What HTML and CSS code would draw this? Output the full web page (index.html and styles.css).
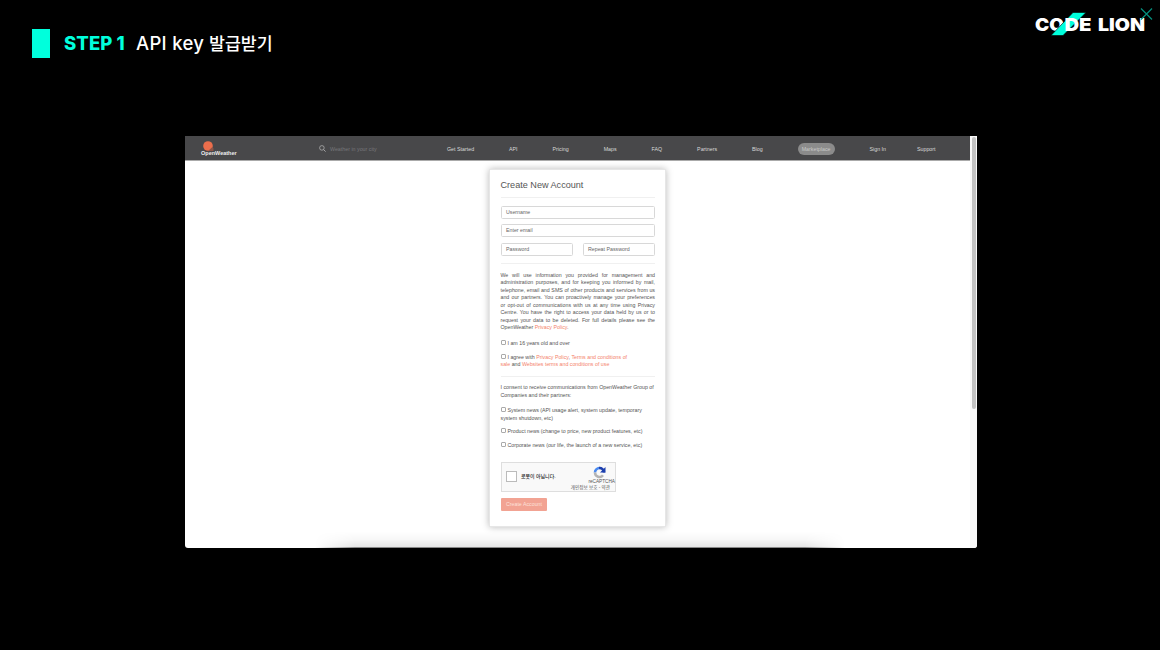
FILE: index.html
```html
<!DOCTYPE html>
<html lang="ko">
<head>
<meta charset="utf-8">
<title>STEP 1 API key 발급받기</title>
<link rel="stylesheet" href="styles.css">
</head>
<body>
<header class="slide-head">
  <div class="marker"></div>
  <h1 class="slide-title"><span class="step">STEP 1</span><span class="subject">API key</span><span class="subject-ko">발급받기</span></h1>
  <svg class="brand" width="130" height="40" viewBox="0 0 130 40">
    <text class="brand-text" x="5" y="31" textLength="29" lengthAdjust="spacingAndGlyphs">CO</text>
    <path d="M43 12.500h13L33 35.500H21z" fill="#00ffdc" stroke="#000" stroke-width=".6"/>
    <text class="brand-text" x="34.500" y="31" textLength="27" lengthAdjust="spacingAndGlyphs">DE</text>
    <text class="brand-text" x="68" y="31" textLength="47" lengthAdjust="spacingAndGlyphs">LION</text>
    <path d="M111 8.500l11 11M122 8.500l-11 11" stroke="#048f7d" stroke-width="1.200"/>
  </svg>
</header>
<main class="window">
  <div class="page">
    <nav class="nav">
      <div class="ow-logo">
        <svg width="11" height="10" viewBox="0 0 11 10"><circle cx="5" cy="5" r="4.800" fill="#ec6e4c"/><path d="M6.500 10V9A1.500 1.500 0 0 1 8 7.500a1.300 1.300 0 0 1 2.500 1V10z" fill="#8d5547"/></svg>
        <span>OpenWeather</span>
      </div>
      <div class="search">
        <svg width="7" height="7" viewBox="0 0 7 7"><circle cx="2.900" cy="2.900" r="2.300" fill="none" stroke="#bbb" stroke-width=".7"/><path d="M4.600 4.600l2 2" stroke="#bbb" stroke-width=".8"/></svg>
        <span>Weather in your city</span>
      </div>
      <div class="links">
        <span>Get Started</span><span>API</span><span>Pricing</span><span>Maps</span><span>FAQ</span><span>Partners</span><span>Blog</span><span class="pill">Marketplace</span><span>Sign In</span><span class="support">Support</span>
      </div>
    </nav>
    <section class="card">
      <h2>Create New Account</h2>
      <hr>
      <div class="fields">
        <div class="input">Username</div>
        <div class="input">Enter email</div>
        <div class="row"><div class="input">Password</div><div class="input">Repeat Password</div></div>
      </div>
      <hr>
      <p class="notice">
        <span>We will use information you provided for management and</span>
        <span>administration purposes, and for keeping you informed by mail,</span>
        <span>telephone, email and SMS of other products and services from us</span>
        <span>and our partners. You can proactively manage your preferences</span>
        <span>or opt-out of communications with us at any time using Privacy</span>
        <span>Centre. You have the right to access your data held by us or to</span>
        <span>request your data to be deleted. For full details please see the</span>
        <span class="last">OpenWeather <a>Privacy Policy</a>.</span>
      </p>
      <p class="check"><i class="box"></i>I am 16 years old and over</p>
      <p class="check agree"><i class="box"></i>I agree with <a>Privacy Policy</a>, <a>Terms and conditions of<br>sale</a> and <a>Websites terms and conditions of use</a></p>
      <hr>
      <p class="consent">I consent to receive communications from OpenWeather Group of<br>Companies and their partners:</p>
      <p class="check"><i class="box"></i>System news (API usage alert, system update, temporary<br>system shutdown, etc)</p>
      <p class="check"><i class="box"></i>Product news (change to price, new product features, etc)</p>
      <p class="check"><i class="box"></i>Corporate news (our life, the launch of a new service, etc)</p>
      <div class="captcha">
        <i class="tick"></i>
        <span class="robot">로봇이 아닙니다.</span>
        <div class="re">
          <svg width="13" height="13" viewBox="0 0 13 13" fill="none" stroke-width="2.600"><path d="M2 6.500A4.500 4.500 0 0 1 6.500 2" stroke="#4a8af0"/><path d="M6 2a4.500 4.500 0 0 1 5 4.500" stroke="#1c3fae"/><path d="M12.500 1v5.500H7z" fill="#1c3fae"/><path d="M2 6.500a4.500 4.500 0 0 0 8 2.800" stroke="#b4b4b4"/></svg>
          <span>reCAPTCHA</span>
          <span class="terms">개인정보 보호 - 약관</span>
        </div>
      </div>
      <div class="submit">Create Account</div>
    </section>
    <div class="bottom-shade"></div>
  </div>
  <div class="track"><div class="thumb"></div></div>
</main>
</body>
</html>
```
FILE: styles.css
```css
* { box-sizing: border-box; }
body {
  margin: 0; width: 1160px; height: 650px; overflow: hidden; background: #000;
  font-family: "Liberation Sans", "Noto Sans CJK KR", sans-serif;
}
h1, h2, p { margin: 0; font-weight: 400; }
.slide-head { display: flex; height: 136px; padding-left: 32px; }
.marker { width: 18px; height: 29px; margin-top: 29px; background: #00ffdc; }
.slide-title {
  display: flex; margin: 29px 0 0 14px; height: 29px; line-height: 29px;
  font-family: Inter, "Noto Sans CJK KR", sans-serif; font-size: 18.5px; color: #fff; white-space: nowrap;
}
.step { width: 72px; font-weight: 800; color: #00ffdc; letter-spacing: .1px; }
.subject { width: 73px; font-weight: 500; letter-spacing: .3px; }
.subject-ko { margin-top: -1px; font-family: "Noto Sans CJK KR", sans-serif; font-weight: 500; font-size: 17.3px; }
.brand { margin-left: auto; }
.brand-text { font-family: Inter, sans-serif; font-weight: 900; font-size: 18px; fill: #fff; }

.window { display: flex; width: 792px; height: 412px; margin-left: 185px; background: #fff; border-radius: 0 0 3px 3px; overflow: hidden; }
.page { position: relative; width: 785px; }
.nav {
  display: flex; align-items: center; height: 25px; padding: 1px 0 0 15px;
  background: #48484a; border-bottom: 1px solid #aaa; color: #d9d9d9; font-size: 5.3px; white-space: nowrap;
}
.ow-logo { width: 119px; height: 22px; padding-top: 3px; font-weight: 700; line-height: 6px; font-size: 5.5px; color: #eee; }
.ow-logo svg { display: block; margin-left: 3px; }
.ow-logo span { display: block; margin: -1px 0 0 1px; }
.search { display: flex; align-items: center; gap: 4px; width: 128px; color: #77777a; }
.links { display: flex; align-items: center; gap: 34.95px; }
.pill { width: 37px; height: 12px; line-height: 12px; text-align: center; border-radius: 6px; background: #8b8b8b; color: #c9c9c9; }
.support { margin-left: -4px; }

.card {
  width: 177px; height: 358px; margin: 8px 0 0 304px; padding: 9px 10px 0 11px;
  background: #fff; border: 1px solid #e6e6e6; box-shadow: 0 0 7px rgba(0,0,0,.28);
  font-size: 5.28px; line-height: 7.55px; color: #555; white-space: nowrap;
}
h2 { margin-left: -.5px; height: 18px; font-size: 9.1px; line-height: 12px; color: #555; }
hr { height: 1px; margin: 0; border: 0; background: #f0f0f0; }
.fields { display: grid; gap: 5.300px; padding: 8px 0 7px; }
.row { display: grid; grid-template-columns: 72px 72px; justify-content: space-between; }
.input { height: 13px; padding-left: 4px; line-height: 11.500px; border: 1px solid #d8d8d8; border-radius: 1.500px; color: #666; }
p { margin-left: -.5px; }
.notice { margin-top: 8px; margin-bottom: 8px; }
.notice span { display: block; text-align: justify; text-align-last: justify; }
.notice .last { text-align-last: left; }
a { color: #f4826a; }
.check { margin-bottom: 6px; }
.box { display: inline-block; width: 5px; height: 5px; margin-right: 2px; border: 1px solid #aaa; border-radius: 1px; }
.agree { margin-bottom: 7px; }
.consent { margin-top: 7.4px; margin-bottom: 8.2px; }
.captcha { display: flex; align-items: center; width: 115px; height: 30px; margin-top: 12.400px; padding-left: 4px; background: #f9f9f9; border: 1px solid #dedede; }
.tick { width: 11px; height: 11px; margin-top: -1px; background: #fff; border: 1px solid #bbb; }
.robot { width: 50px; margin: 0 0 0 4px; font-size: 4.95px; font-weight: 500; color: #222; }
.re { display: flex; flex-direction: column; align-items: flex-end; width: 44px; padding-top: 3px; font-size: 4.7px; line-height: 5.5px; }
.re svg { margin-right: 9px; }
.terms { margin-right: 5px; font-size: 4.6px; }
.submit { width: 46px; height: 13px; margin-top: 6px; line-height: 12px; text-align: center; color: #fde0d9; background: #f2a393; border-radius: 1px; }
.bottom-shade {
  position: absolute; left: 130px; bottom: 0; width: 530px; height: 16px;
  background: linear-gradient(transparent, rgba(0,0,0,.03) 50%, rgba(0,0,0,.1)); border-bottom: 1px solid #888;
  mask-image: linear-gradient(90deg, transparent, #000 40px, #000 490px, transparent);
}
.track { width: 7px; padding: 1px 1px 0 2px; background: #f8f8f8; }
.thumb { width: 4px; height: 272px; background: #c1c1c1; border-radius: 2px; }
```
